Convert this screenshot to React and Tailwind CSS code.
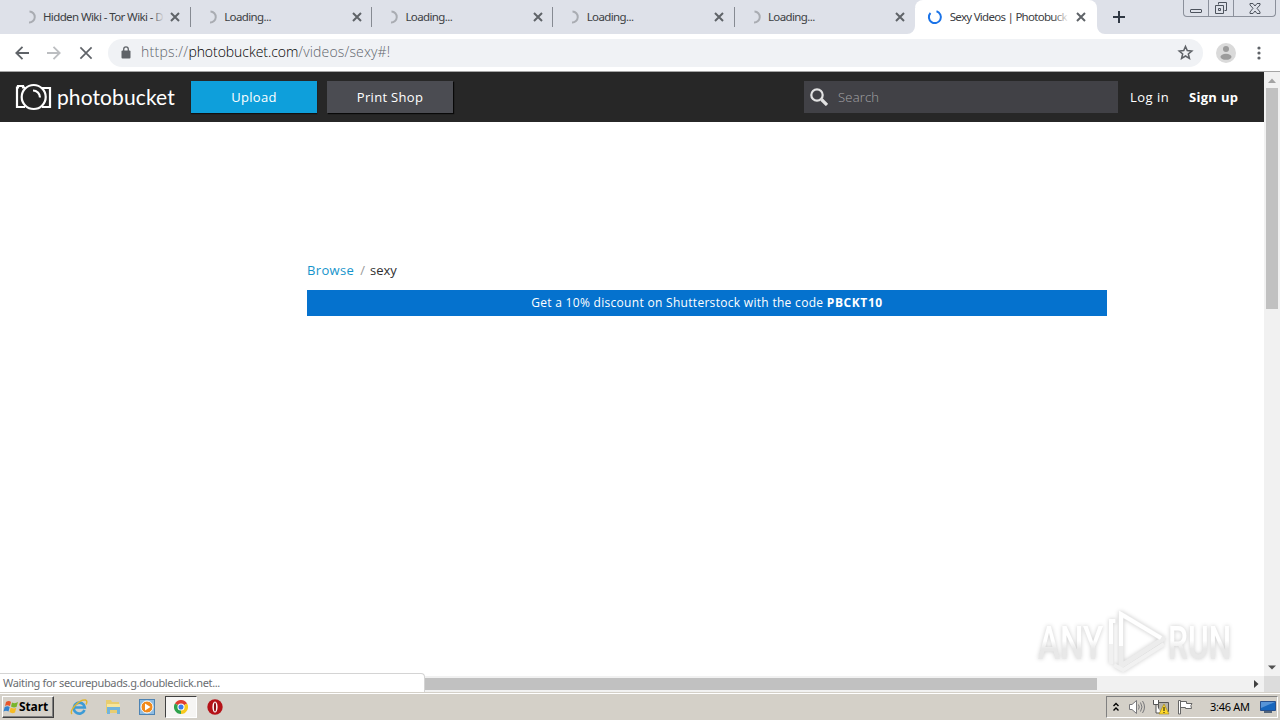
import React from 'react';

const tabs = [
  { title: "Hidden Wiki - Tor Wiki - D", fade: true },
  { title: "Loading..." },
  { title: "Loading..." },
  { title: "Loading..." },
  { title: "Loading..." },
];

function Cross({ className }) {
  return (
    <svg viewBox="0 0 10 10" className={className} fill="none" stroke="currentColor">
      <path d="M1 1 9 9M9 1 1 9" />
    </svg>
  )
}

function Tab({ title, fade }) {
  return (
    <div className="relative flex h-[34px] w-[181.25px] shrink-0 items-center text-[#3c4043]">
      <svg viewBox="0 0 16 16" className="ml-[11px] size-4 shrink-0 text-[#a9acb2]" fill="none" stroke="currentColor" strokeWidth="2">
        <path d="M8.500 2.500A5.500 5.500 0 0 1 8 13.500" />
      </svg>
      <div className="ml-[6.4px] w-[121px] overflow-hidden text-[11.5px] tracking-[-0.6px] whitespace-nowrap">{title}</div>
      {fade && <div className="absolute left-[142px] h-5 w-3 bg-linear-to-r from-transparent to-[#dee1e9]"></div>}
      <Cross className="ml-[6.6px] size-[10px] shrink-0 stroke-2 text-[#5f6368]" />
      <div className="ml-auto h-5 w-px bg-[#868a92]"></div>
    </div>
  )
}

function TabStrip() {
  return (
    <div className="flex h-[34px] bg-[#dee1e9] pl-[9.5px]">
      {tabs.map((tab, i) => <Tab key={i} {...tab} />)}
      <div className="relative -ml-px flex h-[34px] w-[182px] shrink-0 items-center rounded-t-lg bg-white text-[#3c4043]">
        <svg viewBox="0 0 8 8" className="absolute bottom-0 -left-2 size-2"><path d="M8 0V8H0A8 8 0 0 0 8 0" fill="#fff" /></svg>
        <svg viewBox="0 0 8 8" className="absolute -right-2 bottom-0 size-2"><path d="M0 0V8H8A8 8 0 0 1 0 0" fill="#fff" /></svg>
        <svg viewBox="0 0 16 16" className="ml-3 size-4 shrink-0" fill="none" stroke="#1a73e8" strokeWidth="2">
          <path d="M3.500 4A6 6 0 1 0 9.500 2.300" />
        </svg>
        <div className="ml-[7px] w-[120px] overflow-hidden text-[11.5px] tracking-[-0.72px] whitespace-nowrap">Sexy Videos | Photobuck</div>
        <div className="absolute left-[138px] h-5 w-4 bg-linear-to-r from-transparent to-white"></div>
        <Cross className="ml-[6px] size-[10px] shrink-0 stroke-2 text-[#5f6368]" />
      </div>
      <svg viewBox="0 0 12 12" className="mt-[11px] ml-[16px] size-3" stroke="#303844" strokeWidth="2"><path d="M6 0V12M0 6H12" /></svg>
      <div className="ml-auto mr-[4px] flex h-[17px] rounded-b border border-t-0 border-[#8b909b] text-[#4d535d]">
        <div className="flex w-[25px] items-end justify-center border-r border-[#8b909b] pb-[3px]">
          <div className="h-[4px] w-[12px] rounded-[1px] border border-current"></div>
        </div>
        <div className="flex w-[25px] items-center justify-center border-r border-[#8b909b]">
          <svg viewBox="0 0 14 14" className="size-[14px]" fill="none" stroke="currentColor">
            <path d="M4.500 3.500v-2h8v8h-2M1.500 4.500h8v8h-8zM4.500 7.500h2v2h-2z" />
          </svg>
        </div>
        <div className="flex w-[41px] items-center justify-center">
          <svg viewBox="0 0 12 11" className="h-[11px] w-3" fill="none" stroke="currentColor">
            <path d="M1 .5H4L6 3 8 .5H11V2L8 5.300 11 9V10.500H8L6 8 4 10.500H1V9L4 5.300 1 2Z" />
          </svg>
        </div>
      </div>
    </div>
  )
}

function Toolbar() {
  return (
    <div className="flex h-[38px] items-center border-b border-[#a5a5a5] bg-white pl-[15px] text-[#5f6368]">
      <svg viewBox="0 0 14 14" className="size-[14px]" fill="none" stroke="currentColor" strokeWidth="1.800"><path d="M14 7H1.500M7.500.800 1.300 7 7.500 13.200" /></svg>
      <svg viewBox="0 0 14 14" className="ml-[18px] size-[14px] text-[#bcbec1]" fill="none" stroke="currentColor" strokeWidth="1.800"><path d="M0 7H12.500M6.500.800 12.700 7 6.500 13.200" /></svg>
      <Cross className="ml-[18px] size-[14px] stroke-[1.2]" />
      <div className="ml-[15px] flex h-7 w-[1095px] items-center rounded-full bg-[#f0f2f5]">
        <svg viewBox="0 0 10 13" className="ml-[13px] h-[13px] w-[10px]">
          <rect x=".5" y="4.500" width="9" height="8" rx="1" fill="#5f6368" />
          <path d="M2.700 5V3.200a2.300 2.300 0 0 1 4.600 0V5" fill="none" stroke="#5f6368" strokeWidth="1.300" />
        </svg>
        <div className="ml-[10px] pb-px font-['Open_Sans',sans-serif] text-[14px] leading-5 font-light whitespace-nowrap text-[#60656b]">
          <span className="tracking-[0.25px]">https://</span>
          <span className="tracking-[-0.05px] text-black">photobucket.com</span>
          <span className="tracking-[0.15px]">/videos/sexy#!</span>
        </div>
        <svg viewBox="0 0 24 24" className="ml-auto mr-[9px] size-[17px]" fill="none" stroke="#5f6368" strokeWidth="2.200">
          <path d="M12 3.500 14.500 9.300 20.800 9.900 16 14 17.500 20.200 12 16.900 6.500 20.200 8 14 3.200 9.900 9.500 9.300Z" />
        </svg>
      </div>
      <svg viewBox="0 0 20 20" className="ml-[13px] size-5">
        <circle cx="10" cy="10" r="10" fill="#dadada" />
        <circle cx="10" cy="6" r="3" fill="#9b9b9b" />
        <ellipse cx="10" cy="13.800" rx="5.500" ry="3" fill="#9b9b9b" />
      </svg>
      <svg viewBox="0 0 4 14" className="ml-[20.5px] h-[14px] w-1" fill="#5f6368">
        <circle cx="2" cy="2" r="1.600" /><circle cx="2" cy="7" r="1.600" /><circle cx="2" cy="12" r="1.600" />
      </svg>
    </div>
  )
}

function SiteHeader() {
  return (
    <div className="flex h-[50px] items-center bg-[#272727] pl-[15px] font-['Open_Sans',sans-serif] text-[13px] text-white">
      <svg viewBox="0 0 37 28" className="h-7 w-[37px]" fill="none" stroke="#fff" strokeWidth="2.200">
        <path d="M10 4.500H8V3H3V4.500H2V24H10M27 5H35V24H27" />
        <circle cx="18.700" cy="14" r="12" />
        <path d="M18 7.500A7 7 0 0 1 25 14.500" />
      </svg>
      <div className="ml-[5px] w-[120px] font-[Lato,sans-serif] text-[21px] leading-7 tracking-[0.1px] whitespace-nowrap">photobucket</div>
      <div className="ml-[14px] flex h-8 w-[126px] items-center justify-center bg-[#0e9fdb] pt-[2px] tracking-[0.3px] shadow-[0_1px_1px_#111]">Upload</div>
      <div className="ml-[10px] flex h-8 w-[126px] items-center justify-center bg-[#4b4c52] pt-[2px] tracking-[0.3px] shadow-[1px_1px_1px_#080808]">Print Shop</div>
      <div className="ml-auto flex h-8 w-[314px] items-center bg-[#414146] text-[#a5a5a8]">
        <svg viewBox="0 0 18 18" className="ml-[6px] size-[18px]" fill="none" stroke="#e2e2e2">
          <circle cx="7" cy="7" r="5.700" strokeWidth="2.200" /><path d="M11.500 11.500 17 17" strokeWidth="3.200" />
        </svg>
        <span className="ml-[10px] pt-[2px] font-light tracking-[0.2px]">Search</span>
      </div>
      <div className="ml-[12px] w-[59px] pt-[2px] tracking-[0.5px] whitespace-nowrap">Log in</div>
      <div className="w-[75px] pt-[2px] font-bold tracking-[0.3px] whitespace-nowrap">Sign up</div>
    </div>
  )
}

function Watermark() {
  return (
    <svg viewBox="0 0 210 70" className="absolute right-[24px] bottom-0 h-[70px] w-[210px] overflow-visible drop-shadow-[0_0_2px_#ccc]" fill="none" stroke="#fff">
      <defs>
        <linearGradient id="mark" x1="0" y1="0" x2="0" y2="1">
          <stop offset="0.45" stopColor="#fff" /><stop offset="0.6" stopColor="#e8e8e8" />
        </linearGradient>
      </defs>
      <g fontFamily="Roboto, sans-serif" fontSize="46" fontWeight="500" fill="url(#mark)" stroke="none">
        <text transform="translate(8 53) scale(0.72 1)">ANY</text>
        <text transform="translate(138 53) scale(0.69 1)">RUN</text>
      </g>
      <path d="M91 61V8L133 33 91 60" stroke="#ececec" strokeWidth="5" strokeLinejoin="round" />
      <path d="M81 58V15H86M84 59 93 64 134 38" stroke="#f1f1f1" strokeWidth="4" strokeLinejoin="round" />
      <path d="M91 40V8L131 32M81 38V15H85" stroke="#fff" strokeWidth="4" />
    </svg>
  )
}

function Page() {
  return (
    <div className="relative flex h-[604px] w-[1264px] flex-col bg-white">
      <SiteHeader />
      <div className="ml-[307px] w-[800px] pt-[139px] font-['Open_Sans',sans-serif]">
        <div className="flex h-5 items-center gap-[6px] text-[13px] whitespace-nowrap">
          <span className="tracking-[0.35px] text-[#1594cb]">Browse</span>
          <span className="text-[#999]">/</span>
          <span className="-ml-px text-[#303030]">sexy</span>
        </div>
        <div className="mt-[9px] flex h-[26px] items-center justify-center bg-[#0572ce] text-[12px] text-white">
          <div className="whitespace-nowrap"><span className="tracking-[0.3px]">Get a 10% discount on Shutterstock with the code </span><b className="tracking-[0.6px]">PBCKT10</b></div>
        </div>
      </div>
      <Watermark />
    </div>
  )
}

function ScrollBars() {
  return (
    <div className="flex h-[604px] w-4 flex-col items-center bg-[#f1f1f1]">
      <svg viewBox="0 0 16 16" className="size-4"><path d="M4 11 8 6.500 12 11Z" fill="#a3a3a3" /></svg>
      <div className="h-[221px] w-3 bg-[#c1c1c1]"></div>
      <svg viewBox="0 0 16 16" className="mt-auto mb-px size-4"><path d="M4 6.500H12L8 10.500Z" fill="#505050" /></svg>
    </div>
  )
}

function StatusRow() {
  return (
    <div className="flex h-4 bg-[#f1f1f1]">
      <div className="relative -mt-[3px] h-[19px] w-[425px] rounded-tr border-t border-r border-[#d4d4d4] bg-white pl-[3px] text-[11px] leading-[18px] tracking-[-0.34px] whitespace-nowrap text-[#6a6d71]">
        Waiting for securepubads.g.doubleclick.net...
      </div>
      <div className="mt-[2px] h-3 w-[672px] bg-[#c1c1c1]"></div>
      <svg viewBox="0 0 16 16" className="ml-auto mr-4 size-4"><path d="M6 4V12L10.500 8Z" fill="#404040" /></svg>
      <div className="-ml-4 w-4 bg-[#dcdcdc]"></div>
    </div>
  )
}

function Taskbar() {
  return (
    <div className="flex h-7 items-center border-t border-[#d4d0c8] bg-[#d4d0c8] pt-px text-black shadow-[inset_0_1px_0_#fff]">
      <div className="ml-[2px] flex h-[22px] w-[52px] items-center border border-t-white border-r-[#404040] border-b-[#404040] border-l-white shadow-[inset_-1px_-1px_0_#808080]">
        <svg viewBox="0 0 16 16" className="size-4">
          <path d="M3 3Q6 1 8 3L7 7Q4 5.500 2 7Z" fill="#e6562b" />
          <path d="M9 3.500Q12 5 15 3L13.500 8Q10.500 9 8 7.500Z" fill="#79b52b" />
          <path d="M1.700 8Q4.500 6.500 6.700 8L5.500 12.500Q3 11 .5 12.500Z" fill="#3182cf" />
          <path d="M7.700 8.500Q10.500 10 13.200 9L12 13.500Q9 15 6.500 13Z" fill="#f6bb24" />
        </svg>
        <span className="text-[12px] font-bold tracking-[-0.1px]">Start</span>
      </div>
      <svg viewBox="0 0 18 18" className="ml-[16px] size-[18px]" fill="none">
        <path d="M14.500 12A5.500 5.500 0 1 1 14.800 9.500H5" stroke="#3c9bd6" strokeWidth="2.600" />
        <path d="M2 16C-1 13 9 1 15.500 2 17.500 3 17 5 16 6.500" stroke="#dfb52e" strokeWidth="1.400" />
      </svg>
      <svg viewBox="0 0 18 18" className="ml-[16px] size-[18px]">
        <path d="M2 2H7L8 4H15V15H2Z" fill="#e8cd70" /><path d="M3 6H16V12H3Z" fill="#f8e69b" />
        <path d="M3 9H16V16H13V12H6V16H3Z" fill="#72b4dc" />
      </svg>
      <svg viewBox="0 0 18 18" className="ml-[16px] size-[18px]">
        <rect x="1.500" y="1.500" width="15" height="15" fill="#8ebce2" stroke="#4d83b3" />
        <circle cx="9" cy="9" r="6" fill="#f18a1c" stroke="#fff" /><path d="M7 5.500V12.500L12.500 9Z" fill="#fff" />
      </svg>
      <div className="ml-[9px] flex h-[22px] w-[32px] items-center justify-center border border-t-[#404040] border-r-white border-b-white border-l-[#404040] bg-[#f6f5f3]">
        <svg viewBox="0 0 16 16" className="size-[14px]">
          <path d="M8 8 1.070 4A8 8 0 0 1 14.930 4Z" fill="#df3e30" />
          <path d="M8 8 14.930 4A8 8 0 0 1 8 16Z" fill="#f8c91c" />
          <path d="M8 8V16A8 8 0 0 1 1.070 4Z" fill="#2fa24c" />
          <circle cx="8" cy="8" r="3.500" fill="#3a7cec" stroke="#fff" strokeWidth="1.200" />
        </svg>
      </div>
      <svg viewBox="0 0 18 18" className="ml-[9px] size-[18px]">
        <circle cx="9" cy="9" r="7.700" fill="#b51218" /><ellipse cx="9" cy="9" rx="2.600" ry="5.500" fill="#fff" />
        <ellipse cx="9" cy="9" rx="1.100" ry="4.500" fill="#8d1015" />
      </svg>
      <div className="ml-auto mr-[2px] flex h-[22px] w-[172px] items-center border border-t-[#808080] border-r-white border-b-white border-l-[#808080]">
        <svg viewBox="0 0 8 10" className="ml-[5px] h-[10px] w-2" fill="none" stroke="#000" strokeWidth="1.400"><path d="M1.500 4 4 1.500 6.500 4M1.500 8.500 4 6 6.500 8.500" /></svg>
        <svg viewBox="0 0 18 16" className="ml-[8px] h-4 w-[18px]" fill="none" stroke="#77777a">
          <path d="M1.500 5.500H4L8.500 1.500V14.500L4 10.500H1.500Z" fill="#fff" />
          <path d="M10.500 5.500Q12 8 10.500 10.500M12.500 3.500Q15.500 8 12.500 12.500M14.500 2Q18.500 8 14.500 14" />
        </svg>
        <svg viewBox="0 0 18 16" className="ml-[6px] h-4 w-[18px]">
          <path d="M6.500 3.500H16.500V12.500H6.500Z" fill="#b5b2a8" stroke="#555" />
          <path d="M1.500 1V5.500H6.500V1M4 5.500V14H9" fill="#fff" stroke="#555" />
          <path d="M12 5 17 15H7Z" fill="#ffd929" stroke="#9b8118" strokeWidth=".6" /><path d="M12 8V12M12 13V14" stroke="#111" />
        </svg>
        <svg viewBox="0 0 16 16" className="ml-[7px] size-4" fill="#fff" stroke="#666">
          <path d="M1.500 1.500H3.500V15H1.500ZM3.500 2.500H9.500V4.500H15Q13 6 14.500 9.500H8.500V8.500H3.500Z" />
        </svg>
        <span className="ml-[17px] w-[42px] text-[11px] tracking-[-0.3px] whitespace-nowrap">3:46 AM</span>
        <svg viewBox="0 0 16 14" className="ml-auto mr-px h-[14px] w-4">
          <path d="M.5 1.500H15.500V10.500H.5Z" fill="#1766bd" stroke="#28508d" /><path d="M1 2H15L1 8Z" fill="#5794d7" />
          <path d="M4 11H12V13H4Z" fill="#546579" />
        </svg>
      </div>
    </div>
  )
}

function App() {
  return (
    <div className="h-[720px] w-[1280px] overflow-hidden bg-white font-['Noto_Sans',sans-serif]">
      <TabStrip />
      <Toolbar />
      <div className="flex">
        <Page />
        <ScrollBars />
      </div>
      <StatusRow />
      <Taskbar />
    </div>
  )
}

export default App
